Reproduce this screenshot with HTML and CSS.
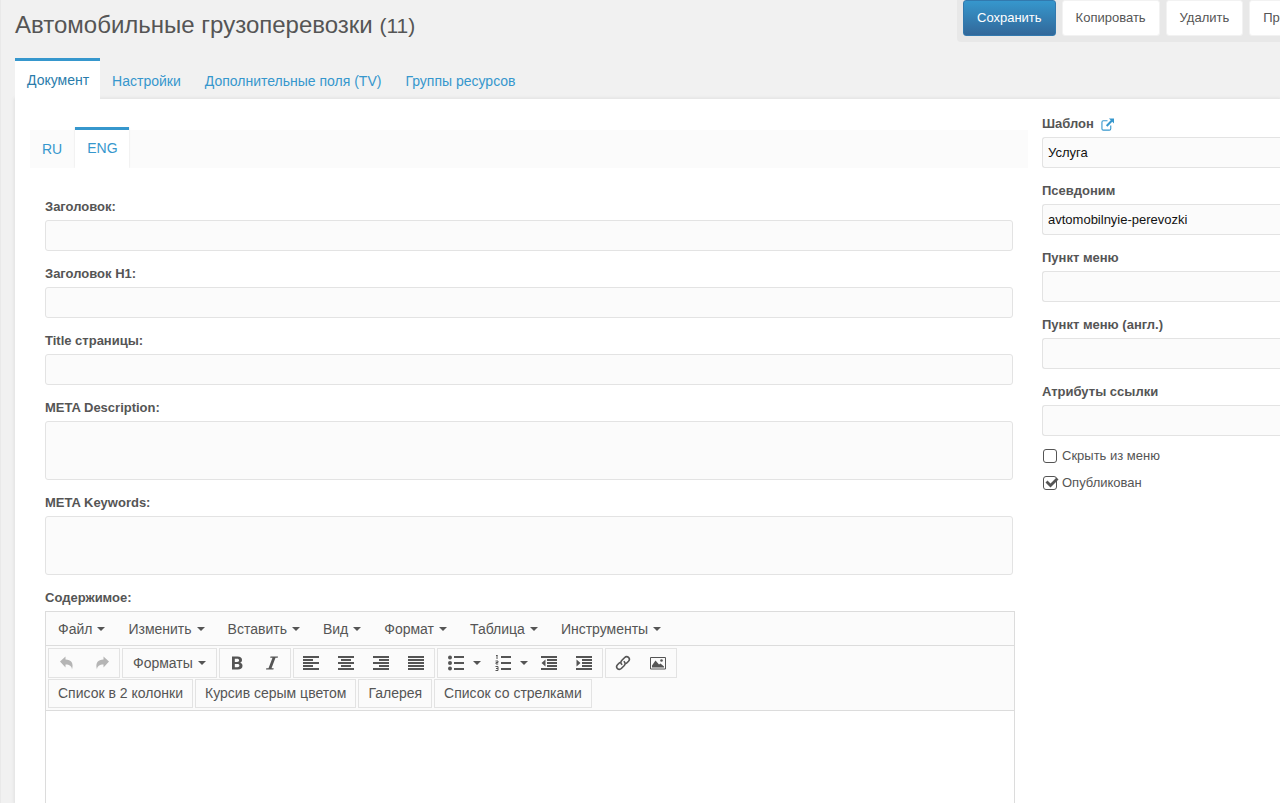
FILE: index.html
```html
<!DOCTYPE html>
<html lang="ru">
<head>
<meta charset="utf-8">
<title>Автомобильные грузоперевозки (11)</title>
<link rel="stylesheet" href="styles.css">
</head>
<body>
<header class="page-header">
  <h1 class="page-title">Автомобильные грузоперевозки <small>(11)</small></h1>
  <div class="actions">
    <button class="action action-primary" type="button">Сохранить</button>
    <button class="action" type="button">Копировать</button>
    <button class="action" type="button">Удалить</button>
    <button class="action" type="button">Просмотр</button>
  </div>
</header>

<nav class="tabs">
  <a class="tab tab-active" href="#document">Документ</a>
  <a class="tab" href="#settings">Настройки</a>
  <a class="tab" href="#tv">Дополнительные поля (TV)</a>
  <a class="tab" href="#groups">Группы ресурсов</a>
</nav>

<main class="panel">
  <section class="content">
    <nav class="lang-tabs">
      <a class="lang-tab" href="#ru">RU</a>
      <a class="lang-tab lang-tab-active" href="#eng">ENG</a>
    </nav>
    <div class="fields">
      <div class="field"><label for="title">Заголовок:</label><input class="control" id="title" type="text"></div>
      <div class="field"><label for="h1">Заголовок H1:</label><input class="control" id="h1" type="text"></div>
      <div class="field"><label for="page-title">Title страницы:</label><input class="control" id="page-title" type="text"></div>
      <div class="field"><label for="description">META Description:</label><textarea class="control control-area" id="description"></textarea></div>
      <div class="field"><label for="keywords">META Keywords:</label><textarea class="control control-area" id="keywords"></textarea></div>
      <div class="field field-editor">
        <label for="body-text">Содержимое:</label>
        <div class="editor">
          <div class="menubar">
            <button class="menu caret" type="button">Файл</button>
            <button class="menu caret" type="button">Изменить</button>
            <button class="menu caret" type="button">Вставить</button>
            <button class="menu caret" type="button">Вид</button>
            <button class="menu caret" type="button">Формат</button>
            <button class="menu caret" type="button">Таблица</button>
            <button class="menu caret" type="button">Инструменты</button>
          </div>
          <div class="toolbar">
            <div class="tool-row">
              <div class="group">
                <button class="tool tool-off" type="button" aria-label="Отменить"><svg viewBox="0 0 16 16"><path d="M1 6.500 6.500 1.500v3C12 4.500 15 8 13 14.500c-.2-3.500-2.500-5-6.500-5v3z"/></svg></button>
                <button class="tool tool-off" type="button" aria-label="Повторить"><svg viewBox="0 0 16 16"><path d="M15 6.500 9.500 1.500v3C4 4.500 1 8 3 14.500c.2-3.500 2.500-5 6.500-5v3z"/></svg></button>
              </div>
              <div class="group"><button class="text-tool caret" type="button">Форматы</button></div>
              <div class="group">
                <button class="tool" type="button" aria-label="Полужирный"><svg viewBox="0 0 16 16"><path fill-rule="evenodd" d="M3 1.500h5.500c3 0 4.500 1.300 4.500 3.500 0 1.400-.7 2.300-1.800 2.800 1.500.4 2.300 1.500 2.300 3 0 2.500-1.700 3.700-4.700 3.700H3zM5.800 3.700v3.200h2.300c1.300 0 2-.5 2-1.600s-.7-1.600-2-1.600zm0 5.200v3.400h2.500c1.400 0 2.100-.6 2.100-1.700s-.7-1.700-2.100-1.700z"/></svg></button>
                <button class="tool" type="button" aria-label="Курсив"><svg viewBox="0 0 16 16"><path d="M6.500 1.500H14l-.3 1.200h-2.200L7.500 13.300h2.200l-.3 1.200H2l.3-1.200h2.200L8.500 2.700H6.200z"/></svg></button>
              </div>
              <div class="group">
                <button class="tool" type="button" aria-label="По левому краю"><svg viewBox="0 0 16 16"><path d="M0 1h16v2H0zm0 3h10v2H0zm0 3h16v2H0zm0 3h10v2H0zm0 3h16v2H0z"/></svg></button>
                <button class="tool" type="button" aria-label="По центру"><svg viewBox="0 0 16 16"><path d="M0 1h16v2H0zm3 3h10v2H3zM0 7h16v2H0zm3 3h10v2H3zm-3 3h16v2H0z"/></svg></button>
                <button class="tool" type="button" aria-label="По правому краю"><svg viewBox="0 0 16 16"><path d="M0 1h16v2H0zm6 3h10v2H6zM0 7h16v2H0zm6 3h10v2H6zm-6 3h16v2H0z"/></svg></button>
                <button class="tool" type="button" aria-label="По ширине"><svg viewBox="0 0 16 16"><path d="M0 1h16v2H0zm0 3h16v2H0zm0 3h16v2H0zm0 3h16v2H0zm0 3h16v2H0z"/></svg></button>
              </div>
              <div class="group">
                <button class="tool tool-wide caret" type="button" aria-label="Маркированный список"><svg viewBox="0 0 16 16"><path d="M6 1h10v2H6zm0 6h10v2H6zm0 6h10v2H6z"/><circle cx="2" cy="2.500" r="2"/><circle cx="2" cy="8" r="2"/><circle cx="2" cy="13.500" r="2"/></svg></button>
                <button class="tool tool-wide caret" type="button" aria-label="Нумерованный список"><svg viewBox="0 0 16 16"><path d="M6 1h10v2H6zm0 6h10v2H6zm0 6h10v2H6z"/><path d="M1 .5h1.500M2 0v4M.5 6h2.500v1.500h-2v1.500h2.200M.5 11.500h2.500v4H.5M1 13.500h2" fill="none" stroke="currentColor"/></svg></button>
                <button class="tool" type="button" aria-label="Уменьшить отступ"><svg viewBox="0 0 16 16"><path d="M0 1h16v2H0zm6 3h10v2H6zm0 3h10v2H6zm0 3h10v2H6zm-6 3h16v2H0zM4.500 4.500v7L.5 8z"/></svg></button>
                <button class="tool" type="button" aria-label="Увеличить отступ"><svg viewBox="0 0 16 16"><path d="M0 1h16v2H0zm6 3h10v2H6zm0 3h10v2H6zm0 3h10v2H6zm-6 3h16v2H0zM.5 4.500v7l4-3.500z"/></svg></button>
              </div>
              <div class="group">
                <button class="tool" type="button" aria-label="Ссылка"><svg viewBox="0 0 16 16"><g fill="none" stroke="currentColor" stroke-width="1.600" stroke-linecap="round"><path d="M6.700 9.300C5.500 8 5.700 6.600 6.700 5.500l3-3c1.200-1.200 2.700-1.200 3.800-.1s1.100 2.700 0 3.900l-2 2"/><path d="M9.300 6.700c1.200 1.300 1 2.700 0 3.800l-3 3c-1.200 1.200-2.700 1.200-3.800.1s-1.100-2.700 0-3.900l2-2"/></g></svg></button>
                <button class="tool" type="button" aria-label="Изображение"><svg viewBox="0 0 16 16"><path d="M.5 2.500h15v11.500H.5z" fill="none" stroke="currentColor"/><path d="M2 12.500v-2l3.500-5 3.500 4 1.500-1 3.500 3v1z"/><circle cx="11.500" cy="5.500" r="1.300"/></svg></button>
              </div>
            </div>
            <div class="tool-row">
              <div class="group"><button class="text-tool" type="button">Список в 2 колонки</button></div>
              <div class="group"><button class="text-tool" type="button">Курсив серым цветом</button></div>
              <div class="group"><button class="text-tool" type="button">Галерея</button></div>
              <div class="group"><button class="text-tool" type="button">Список со стрелками</button></div>
            </div>
          </div>
          <textarea class="editor-body" id="body-text"></textarea>
        </div>
      </div>
    </div>
  </section>

  <aside class="sidebar">
    <div class="field">
      <div class="label-row">
        <label for="template">Шаблон</label>
        <a class="external" href="#template" aria-label="Открыть шаблон"><svg viewBox="0 0 14 14"><path d="M7 3H2.500Q1 3 1 4.500v7Q1 13 2.500 13h6.500q1.500 0 1.500-1.500V8" fill="none" stroke="currentColor" stroke-width="1.200"/><path d="M8.500.5H14V6l-1.900-1.900-5.200 5.200-1.600-1.600 5.200-5.200z"/></svg></a>
      </div>
      <select class="control" id="template"><option>Услуга</option></select>
    </div>
    <div class="field"><label for="alias">Псевдоним</label><input class="control" id="alias" type="text" value="avtomobilnyie-perevozki"></div>
    <div class="field"><label for="menu-title">Пункт меню</label><input class="control" id="menu-title" type="text"></div>
    <div class="field"><label for="menu-title-en">Пункт меню (англ.)</label><input class="control" id="menu-title-en" type="text"></div>
    <div class="field"><label for="link-attributes">Атрибуты ссылки</label><input class="control" id="link-attributes" type="text"></div>
    <div class="checks">
      <label class="check"><span class="tick"><input type="checkbox"><svg viewBox="0 0 16 14"><path d="m2.500 6.500 2-2L7.500 7.500 13.500 1.500l2 2-8 8z"/></svg></span>Скрыть из меню</label>
      <label class="check"><span class="tick"><input type="checkbox" checked><svg viewBox="0 0 16 14"><path d="m2.500 6.500 2-2L7.500 7.500 13.500 1.500l2 2-8 8z"/></svg></span>Опубликован</label>
    </div>
  </aside>
</main>
</body>
</html>
```
FILE: styles.css
```css
* {
  box-sizing: border-box;
}

body {
  margin: 0;
  height: 100vh;
  display: flex;
  flex-direction: column;
  overflow: hidden;
  border-left: 1px solid #e9e9e9;
  background: #f1f1f1;
  color: #555;
  font: 13px/20px "Liberation Sans", Arial, sans-serif;
}

button,
input,
select,
textarea {
  font: inherit;
  color: inherit;
}

a {
  color: #3697cd;
  text-decoration: none;
}

svg {
  display: block;
  fill: currentColor;
}

/* Header */

.page-header {
  flex: none;
  display: flex;
  align-items: flex-start;
  justify-content: space-between;
  height: 58px;
  padding-left: 14px;
}

.page-title {
  margin: 0;
  padding-top: 9px;
  font-size: 24px;
  line-height: 32px;
  font-weight: 400;
  white-space: nowrap;
}

.page-title small {
  font-size: 21px;
}

.actions {
  flex: none;
  display: flex;
  gap: 6px;
  width: 323px;
  padding: 0 0 6px 6px;
  overflow: hidden;
  border-radius: 0 0 0 4px;
  background: #e8e8e8;
}

.action {
  flex: none;
  height: 36px;
  padding: 0 13px;
  border: 1px solid #f2f2f2;
  border-radius: 3px;
  background: #fff;
}

.action-primary {
  border-color: #3279ae;
  background: linear-gradient(#3697cd, #32689a);
  color: #fff;
}

/* Main tabs */

.tabs {
  flex: none;
  display: flex;
  height: 41px;
  padding-left: 14px;
  font-size: 14px;
}

.tab {
  padding: 13px 12px 0;
}

.tab-active {
  z-index: 1;
  padding: 9px 11px 0 12px;
  border-top: 3px solid #3697cd;
  background: #fff;
  color: #2a7cab;
}

.panel {
  flex: 1;
  display: grid;
  grid-template-columns: minmax(0, 1fr) 238px;
  gap: 14px;
  min-height: 0;
  margin-left: 14px;
  padding-left: 15px;
  background: #fff;
  box-shadow: 0 0 3px 1px #e0e0e0;
}

/* Language tabs */

.content {
  display: flex;
  flex-direction: column;
  min-height: 0;
  padding-top: 28px;
}

.lang-tabs {
  flex: none;
  display: flex;
  height: 41px;
  background: linear-gradient(#fff 3px, #fbfbfb 3px);
  font-size: 14px;
}

.lang-tab {
  padding: 12px 13px 0 12px;
}

.lang-tab-active {
  padding: 8px 11px 0 12px;
  border-top: 3px solid #3697cd;
  background: #fff;
  box-shadow: 0 0 2px #e0e0e0;
  clip-path: inset(0 -2px);
}

/* Form fields */

.fields {
  flex: 1;
  display: flex;
  flex-direction: column;
  gap: 13px;
  min-height: 0;
  padding: 29px 15px 0;
}

.field {
  display: flex;
  flex-direction: column;
  gap: 3px;
}

.field label {
  font-weight: 700;
}

.label-row {
  display: flex;
  align-items: center;
  gap: 7px;
}

.external svg {
  width: 13px;
  height: 13px;
}

.control {
  width: 100%;
  height: 31px;
  margin: 0;
  padding: 0 5px;
  border: 1px solid #e3e3e3;
  border-radius: 3px;
  background: #fbfbfb;
  color: #111;
  appearance: none;
}

.control-area {
  display: block;
  height: 59px;
  resize: none;
}

/* Editor */

.field-editor {
  flex: 1;
  min-height: 0;
}

.editor {
  flex: 1;
  display: flex;
  flex-direction: column;
  min-height: 0;
  margin-right: -2px;
  border: 1px solid #dcdcdc;
  border-bottom: 0;
  background: #fff;
  font-size: 14px;
}

.menubar {
  flex: none;
  display: flex;
  gap: 1px;
  height: 34px;
  padding-left: 1px;
  border-bottom: 1px solid #dcdcdc;
  background: #fbfbfb;
}

.menu,
.tool,
.text-tool {
  display: flex;
  align-items: center;
  justify-content: center;
  gap: 5px;
  margin: 0;
  padding: 0 9px;
  border: 0;
  background: none;
  white-space: nowrap;
}

.menu {
  padding: 0 11px;
}

.text-tool.caret {
  padding: 0 10px;
}

.caret::after {
  content: "";
  border: 4px solid transparent;
  border-top-color: currentColor;
  border-bottom: 0;
}

.toolbar {
  flex: none;
  display: grid;
  gap: 1px;
  padding: 2px;
  border-bottom: 1px solid #dcdcdc;
  background: #fbfbfb;
}

.tool-row {
  display: flex;
  gap: 2px;
}

.group {
  display: flex;
  height: 30px;
  border: 1px solid #e3e3e3;
}

.tool-row + .tool-row .group {
  height: 29px;
}

.tool-row + .tool-row .text-tool {
  padding-bottom: 2px;
}

.tool {
  width: 35px;
  padding: 0;
}

.tool-wide {
  justify-content: flex-start;
  gap: 9px;
  width: 47px;
  padding-left: 10px;
}

.tool svg {
  width: 16px;
  height: 16px;
}

.tool-off {
  color: #b5b5b5;
}

.editor-body {
  flex: 1;
  width: 100%;
  min-height: 0;
  padding: 8px;
  border: 0;
  background: #fff;
  resize: none;
}

/* Sidebar */

.sidebar {
  display: flex;
  flex-direction: column;
  gap: 13px;
  padding-top: 15px;
}

.sidebar .control {
  border-right: 0;
  border-radius: 3px 0 0 3px;
}

.checks {
  display: grid;
  gap: 7px;
  margin-top: -3px;
}

.check {
  display: flex;
  align-items: center;
  gap: 3px;
}

.tick {
  display: grid;
  width: 17px;
}

.tick input,
.tick svg {
  grid-area: 1 / 1;
}

.tick input {
  appearance: none;
  width: 14px;
  height: 14px;
  margin: 0 0 0 1px;
  border: 1px solid #555;
  border-radius: 3px;
}

.tick svg {
  width: 16px;
  height: 14px;
  margin-left: 1px;
  visibility: hidden;
  pointer-events: none;
}

.tick input:checked + svg {
  visibility: visible;
}
```
